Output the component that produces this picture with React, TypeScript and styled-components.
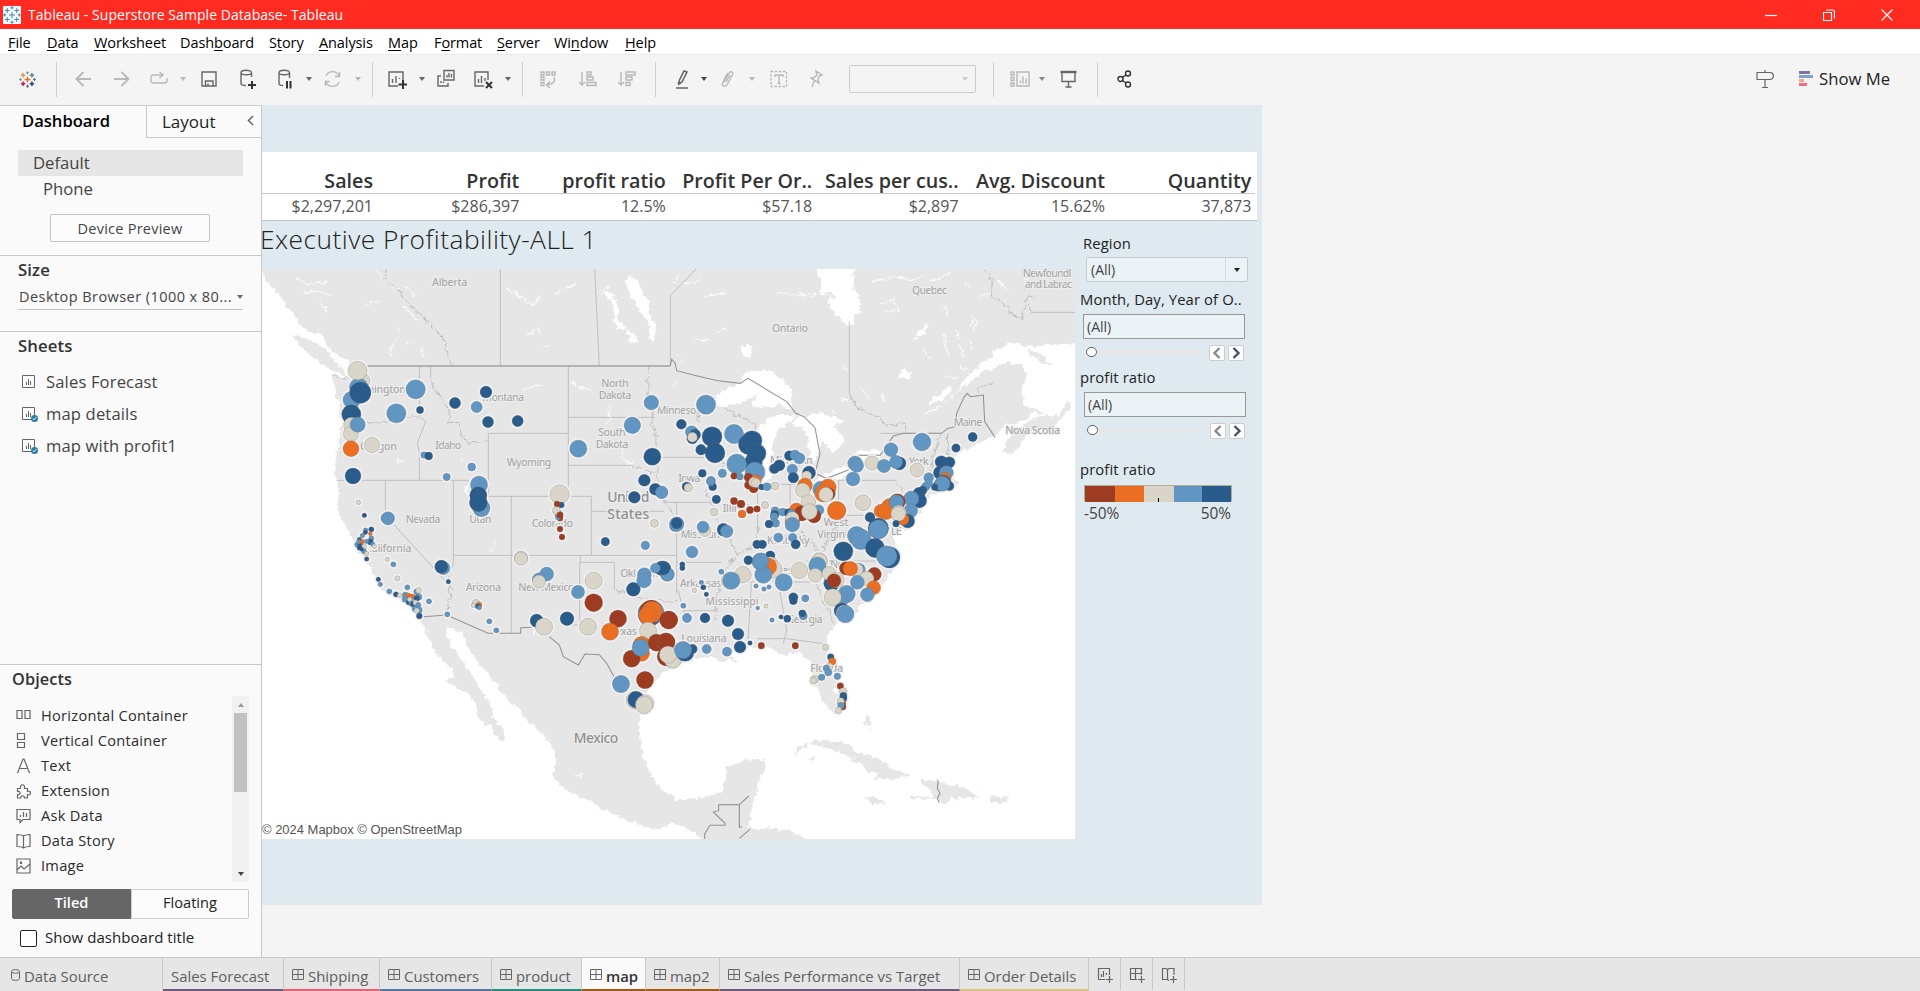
import React from "react";
import styled, { createGlobalStyle } from "styled-components";

const Global = createGlobalStyle`
  *{box-sizing:border-box}
  body{margin:0;background:#f4f4f4;overflow:hidden}
  #root{font-family:"Open Sans","Noto Sans",sans-serif;color:#333}
  svg{display:block;flex:none}
`;

const Window = styled.div`width:1920px;height:991px;display:flex;flex-direction:column;background:#f4f4f4;`;
const TitleBar = styled.header`
  height:29px;flex:none;background:#ff2a20;color:#fff;display:flex;align-items:center;
  padding-left:3px;font-size:14px;letter-spacing:.05px;
`;
const TitleText = styled.span`margin-left:7px;flex:1;white-space:nowrap;`;
const WindowButtons = styled.div`display:flex;gap:46px;padding-right:27px;`;
const MenuBar = styled.nav`height:25px;flex:none;background:#fff;display:flex;padding-left:8px;`;
const MenuItem = styled.span<{ $w: number }>`
  width:${p => p.$w}px;font-size:14.5px;line-height:27px;color:#000;white-space:nowrap;letter-spacing:-.1px;
  u{text-underline-offset:2px;}
`;
const Toolbar = styled.div`
  height:51px;flex:none;background:#f4f4f4;border-top:1px solid #eaeaea;display:flex;align-items:center;padding-bottom:2px;
`;
const Tool = styled.span<{ $gap: number; $c?: string }>`
  margin-left:${p => p.$gap}px;flex:none;color:${p => p.$c || "#666"};
  svg{fill:none;stroke:currentColor;stroke-width:1.4;}
`;
const PlusOver = styled.span`
  width:8px;height:8px;margin:12px 0 0 -8px;flex:none;
  svg{fill:none;stroke:#333;}
`;
const Divider = styled.span<{ $gap: number }>`
  margin-left:${p => p.$gap}px;width:1px;height:35px;background:#cfcfcf;flex:none;
`;
const Caret = styled.span<{ $gap?: number; $c?: string; $s?: number }>`
  margin-left:${p => p.$gap || 0}px;flex:none;width:0;height:0;
  border:${p => p.$s || 3}px solid transparent;border-bottom:0;
  border-top:${p => (p.$s || 3) + 1}px solid ${p => p.$c || "#666"};
`;
const ToolCaret = styled(Caret)`margin-right:-1px;`;
const Combo = styled.span`
  margin-left:26px;width:127px;height:28px;border:1px solid #ccc;border-radius:2px;flex:none;
  display:flex;align-items:center;justify-content:flex-end;padding-right:7px;
`;
const ShowMe = styled.span`margin-left:6px;font-size:16.700px;line-height:22px;padding-bottom:1px;color:#222;white-space:nowrap;`;

const Body = styled.div`flex:1;display:flex;min-height:0;`;
const Side = styled.aside`
  width:262px;flex:none;background:#fafafa;border-right:1px solid #c8c8c8;border-top:1px solid #ccc;
  display:flex;flex-direction:column;
`;
const SideTabs = styled.div`display:flex;height:32px;flex:none;`;
const ActiveTab = styled.div`width:146px;padding-left:22px;font-weight:600;font-size:16.600px;line-height:30px;color:#000;`;
const OtherTab = styled.div`
  flex:1;border-left:1px solid #c8c8c8;border-bottom:1px solid #c8c8c8;padding:0 7px 0 15px;font-size:17px;
  line-height:32px;color:#222;display:flex;justify-content:space-between;
  svg{margin-top:9px;}
`;
const DeviceRow = styled.div<{ $on?: boolean }>`
  margin:${p => (p.$on ? "12px 18px 0" : "0 18px")};height:26px;line-height:26px;font-size:16.700px;color:#444;
  padding-left:${p => (p.$on ? 15 : 25)}px;background:${p => (p.$on ? "#e6e6e6" : "none")};
`;
const PreviewButton = styled.div`
  margin:12px 51px 13px 50px;height:28px;border:1px solid #c4c4c4;border-radius:2px;background:#fcfcfc;
  text-align:center;font-size:14.500px;line-height:27px;letter-spacing:.25px;color:#444;
`;
const Section = styled.section<{ $h: number }>`
  border-top:1px solid #c8c8c8;height:${p => p.$h}px;flex:none;padding:0 18px;
`;
const Heading = styled.h3`margin:0;font-size:16.800px;font-weight:600;line-height:28px;letter-spacing:.1px;color:#333;`;
const SizeSelect = styled.div`
  margin-top:2px;height:24px;line-height:20px;border-bottom:1px solid #c4c4c4;font-size:14.500px;display:flex;padding-bottom:2px;
  align-items:center;justify-content:space-between;white-space:nowrap;letter-spacing:.44px;color:#444;padding-left:1px;
`;
const SheetRow = styled.div`
  display:flex;align-items:center;height:32px;padding-left:4px;gap:8px;font-size:16.600px;letter-spacing:.14px;
  white-space:nowrap;color:#444;
  svg{position:relative;top:1px;}
`;
const SheetList = styled.div`padding-top:5px;`;
const Objects = styled.section`flex:1;border-top:1px solid #c8c8c8;padding:0 12px;`;
const ObjectsHeading = styled(Heading)`font-size:16.300px;height:30px;`;
const ObjectArea = styled.div`display:flex;height:187px;padding-top:1px;justify-content:space-between;`;
const ObjectRow = styled.div`
  display:flex;align-items:center;height:25px;padding-left:4px;gap:9px;font-size:14.600px;letter-spacing:.27px;color:#2c2c2c;white-space:nowrap;
  svg{fill:none;stroke:#666;stroke-width:1.2;position:relative;top:1px;}
`;
const ObjectList = styled.div`padding-top:6px;overflow:hidden;`;
const Scroll = styled.div`
  width:17px;background:#f1f1f1;display:flex;flex-direction:column;align-items:center;padding:7px 0 6px;
`;
const UpCaret = styled.i`border:3.5px solid transparent;border-top:0;border-bottom:4px solid #999;`;
const Thumb = styled.i`width:13px;height:79px;background:#c1c1c1;margin:6px 0 auto;`;
const Toggle = styled.div`display:flex;height:30px;margin-top:7px;font-size:14.6px;line-height:25px;text-align:center;`;
const ToggleOn = styled.div`width:119px;background:#666;color:#fff;font-weight:600;border:1px solid #666;border-radius:2px 0 0 2px;`;
const ToggleOff = styled.div`flex:1;border:1px solid #ccc;color:#222;background:#fcfcfc;border-radius:0 2px 2px 0;`;
const CheckRow = styled.div`
  display:flex;margin:11px 0 0 8px;gap:8px;font-size:15px;line-height:14px;color:#222;white-space:nowrap;letter-spacing:.05px;
`;
const CheckBox = styled.i`width:17px;height:17px;border:1px solid #222;border-radius:2px;background:#fff;`;

const Dashboard = styled.main`width:1000px;height:800px;background:#deeaef;flex:none;padding-top:47px;`;
const Summary = styled.div`
  width:995px;height:69px;background:#fff;border-bottom:1px solid #c4c4c4;display:grid;
  grid-template-columns:115px repeat(6,146.4px);text-align:right;grid-template-rows:42px 26px;
`;
const SumHead = styled.div`
  border-bottom:1px solid #c8c8c8;font-weight:600;font-size:19.700px;line-height:58px;height:42px;white-space:nowrap;color:#333;
  padding-right:4px;display:flex;justify-content:flex-end;
`;
const SumValue = styled.div`font-size:16px;line-height:25px;padding-right:4px;color:#555;`;
const Content = styled.div`display:flex;`;
const MapColumn = styled.div`width:813px;`;
const MapTitle = styled.h1`
  margin:0 0 0 -2px;height:48px;line-height:37px;font-size:26.300px;letter-spacing:.48px;font-weight:300;color:#222;white-space:nowrap;
`;
const Attribution = styled.text`font:39px "Liberation Sans",sans-serif;fill:#555;`;
const MapLabel = styled.text<{ $s?: number }>`
  font:500 ${p => p.$s || 32}px "Noto Sans",sans-serif;fill:${p => (p.$s ? "#8f8f8f" : "#a9a9a9")};
  stroke:#efefef;stroke-width:5px;paint-order:stroke;
`;
const Filters = styled.div`width:187px;padding:10px 12px 0 5px;`;
const FilterLabel = styled.div<{ $in?: number; $h?: number; $top?: number }>`
  font-size:14.800px;line-height:24px;height:${p => p.$h || 26}px;padding-top:${p => p.$top || 0}px;
  font-weight:500;color:#222;letter-spacing:.12px;padding-left:${p => p.$in || 0}px;white-space:nowrap;
`;
const DropBox = styled.div`
  margin-left:6px;width:162px;height:25px;border:1px solid #c4cccf;border-radius:2px;background:#ecf3f6;
  display:flex;align-items:center;padding-left:4px;font-size:14px;color:#444;
`;
const DropArrow = styled.span`
  margin-left:auto;width:22px;height:23px;border-left:1px solid #d4dcdf;display:flex;align-items:center;justify-content:center;
`;
const RangeBox = styled.div<{ $in: number }>`
  margin-left:${p => p.$in}px;width:162px;height:25px;border:1px solid #999;background:#ecf3f6;font-size:14px;
  line-height:24px;padding-left:3px;color:#444;
`;
const SliderRow = styled.div<{ $in: number }>`
  margin:6px 0 0 ${p => p.$in + 3}px;height:16px;display:flex;align-items:center;
`;
const Knob = styled.i`width:11px;height:10px;border:1px solid #666;border-radius:5px;background:#fff;margin-bottom:2px;`;
const Track = styled.i`width:107px;height:4px;background:#e6e6e6;margin-right:5px;margin-bottom:2px;`;
const StepButton = styled.i`
  width:16px;height:16px;background:#fff;border:1px solid #ccc;border-radius:2px;margin-right:3px;
  display:flex;align-items:center;justify-content:center;
`;
const Legend = styled.div`
  margin-left:4px;width:148px;height:16px;border:1px solid #b5ab97;display:grid;
  grid-template-columns:29.5px 29px 30px 28px 1fr;justify-items:stretch;
`;
const Swatch = styled.i<{ $c: string; $tick?: boolean }>`
  background:${p => p.$c};display:flex;justify-content:center;
  &::after{content:"";width:1px;height:4px;flex:none;background:${p => (p.$tick ? "#000" : "none")};margin-top:12px;}
`;
const LegendEnds = styled.div`
  display:flex;justify-content:space-between;width:147px;margin-left:4px;font-size:15.400px;line-height:25px;color:#444;
`;

const TabStrip = styled.footer`
  height:34px;flex:none;background:#e6e6e6;border-top:1px solid #c8c8c8;display:flex;
`;
const SheetTab = styled.div<{ $w: number; $c?: string; $on?: boolean; $pad?: number }>`
  width:${p => p.$w}px;border-right:1px solid #c8c8c8;border-bottom:2px solid ${p => p.$c || "#e6e6e6"};
  background:${p => (p.$on ? "#fafafa" : "#e6e6e6")};font-weight:${p => (p.$on ? 600 : 400)};
  color:${p => (p.$on ? "#333" : "#606060")};display:flex;align-items:center;gap:4px;padding:0 0 0 ${p => p.$pad ?? 8}px;
  font-size:14.900px;white-space:nowrap;
  svg{fill:none;stroke:#666;margin-top:3px;}
`;
const TabName = styled.span`padding-top:5px;`;

const Cell = ({ d, w, h = 20, sw }: { d: string; w: number; h?: number; sw?: number }) => (
  <svg width={w} height={h} viewBox={`0 0 ${w} ${h}`}><path d={d} strokeWidth={sw} /></svg>
);

const Spark = ({ size, mono }: { size: number; mono?: boolean }) => {
  const plus = (x: number, y: number, r: number) => `M${x - r} ${y}h${2 * r}M${x} ${y - r}v${2 * r}`;
  const parts: [number, number, number, string][] = [
    [9, 9, 3, "#ea6f22"], [4.3, 4.5, 2.3, "#e0974a"], [13.7, 4.5, 2.3, "#59879b"], [4.3, 13.5, 2.3, "#c72035"],
    [13.7, 13.5, 2.3, "#1f457e"], [9, 1.8, 1.6, "#7199a6"], [9, 16.2, 1.6, "#5b6591"], [1.6, 9, 1.5, "#7199a6"], [16.4, 9, 1.5, "#5b6591"],
  ];
  return (
    <svg width={size} height={size} viewBox="0 0 18 18">
      {mono && <rect width="18" height="18" fill="#f2f8fb" stroke="none" />}
      {parts.map(([x, y, r, c], i) => <path key={i} d={plus(x, y, r)} stroke={mono ? "#3f88ad" : c} strokeWidth={mono ? 1 : i < 5 ? 1.6 : 1.1} />)}
    </svg>
  );
};

const SheetIcon = ({ used }: { used?: boolean }) => (
  <svg width="16" height="16" viewBox="0 0 16 16" fill="none" stroke="#666">
    <path d="M.5 1.500h12v12H.5zM4.500 11V8M6.500 11V5M8.500 11V7" />
    {used && <><circle cx="12.500" cy="12.500" r="3.500" fill="#2c7fa3" stroke="none" /><path d="M10.900 12.600l1.200 1.200 2.200-2.500" stroke="#fff" /></>}
  </svg>
);
const GridIcon = () => <Cell w={12} h={12} d="M.5 .5h11v10h-11zM6 .5v10M.5 5.500h11" />;

const menu: [string, string, string, number][] = [
  ["", "F", "ile", 39], ["", "D", "ata", 47], ["", "W", "orksheet", 86], ["Dash", "b", "oard", 89], ["S", "t", "ory", 50],
  ["", "A", "nalysis", 69], ["", "M", "ap", 46], ["F", "o", "rmat", 63], ["", "S", "erver", 57], ["Wi", "n", "dow", 71], ["", "H", "elp", 60],
];
const objects: [string, string][] = [
  ["Horizontal Container", "M1 2.500h5v8h-5zM9 2.500h5v8h-5z"],
  ["Vertical Container", "M1.500 .5h7v6h-7zM1.500 9.500h7v5h-7z"],
  ["Text", "M1.500 15L7 1h1l5.500 14M4 10.500h7"],
  ["Extension", "M1.500 5.500h3c-1-5 5-5 4 0h3v3c4-1.500 4 4.500 0 3v3.500h-3c0-3-4-3-4 0h-3v-3.500c3.500 1 3.500-4 0-3z"],
  ["Ask Data", "M1 1.500h13v10h-7l-3 3v-3h-3zM4.500 9V7M7.500 9V4M10.500 9V5"],
  ["Data Story", "M7.500 3c-2-1.500-4-1.500-6.500-1.500v12c3 0 5 .3 6.500 1.500 1.500-1.200 3.500-1.500 6.500-1.500v-12c-2.500 0-4.500 0-6.500 1.500v12"],
  ["Image", "M1 1h13v14h-13zM1 12l4-4 3 3 6-5M4.500 4h1v1.500h-1z"],
];
const summary = [
  ["Sales", "$2,297,201"], ["Profit", "$286,397"], ["profit ratio", "12.5%"], ["Profit Per Or..", "$57.18"],
  ["Sales per cus..", "$2,897"], ["Avg. Discount", "15.62%"], ["Quantity", "37,873"],
];
const sheetTabs: [string, number, string, boolean?, boolean?][] = [
  ["Sales Forecast", 121, "#6b5b7e", false, true], ["Shipping", 96, "#ed5f73"], ["Customers", 112, "#4e79a7"], ["product", 90, "#1f8f7c"],
  ["map", 64, "#a8590f", true], ["map2", 74, "#a8590f"], ["Sales Performance vs Target", 240, "#6b5b7e"], ["Order Details", 129, "#dcc47a"],
];

const palette: Record<string, string> = { B: "#2a5c8b", L: "#6196c3", G: "#d9d5c8", O: "#ea6f22", R: "#9e3c22" };

/* Marks of the four map sheets: "x y radius colour", each sheet measured from its own corner. */
const marks = [
  {
    at: [0, 0],
    list: `308 362 22G,296 382 28L,275 420 26L,293 332 28G,301 398 32B,274 463 29B,274 495 23G,273 522 23G,293 494 23L,273 566 24O,279 648 24B,336 555 23G,467 388 29L,409 460 29L,480 450 11B,678 396 18B,585 429 17B,650 441 17L,684 486 17B,773 483 17B,492 585 10L,506 588 12B,560 651 11L,635 621 12L,657 674 26L,664 744 26L,655 706 26B,655 728 27B,378 775 15L,384 775 20L,313 766 7B,295 727 7G,955 566 26L,1117 496 25L,1174 428 22L,1177 590 26B,1153 661 18B,1205 697 18L,1186 688 18B,1123 712 18B,1183 790 12G,1243 800 14L,1251 790 19B,1036 845 13B,1156 856 13L,899 703 29G,904 735 9B,891 732 9R,895 762 11L,889 752 12G,900 775 9R,894 772 8L,900 765 10R,900 807 9R,906 831 9R,783 893 20G,317 810 7L,334 808 8B,316 817 7B,331 821 6O,307 827 7L,334 835 8L,298 839 7B,331 846 9B,338 853 7L,343 859 7G,292 854 8L,300 850 8B,296 845 7L,307 845 7O,320 844 7L,299 863 8B,313 860 7G,312 874 8L,305 868 6B,320 881 7G,320 897 7B`,
  },
  {
    at: [1200, 0],
    list: `138 434 29L,64 493 15B,95 516 19L,105 524 17B,97 535 17B,97 532 15G,123 569 16B,156 530 30B,165 579 30B,222 522 29L,265 553 30B,276 542 30B,289 580 29B,280 608 27B,230 612 30L,285 636 30L,127 640 12B,187 640 13L,153 663 14L,158 680 12B,152 665 12L,80 680 14B,85 683 13G,5 697 19L,169 718 13B,162 756 12G,222 648 10R,240 650 10L,265 652 13R,288 660 16O,266 675 13R,281 685 14R,281 667 15G,288 669 14G,305 681 9B,321 680 12L,345 678 12G,222 723 11R,243 732 12R,270 750 11R,291 747 10R,315 735 11G,246 762 12O,388 587 15B,405 585 15L,418 595 17L,343 626 15B,358 616 17B,397 628 16L,447 638 20B,400 653 16B,440 648 15G,435 676 22O,428 691 22G,482 688 24L,504 682 25O,490 700 26O,507 702 19R,498 704 22G,530 752 28O,409 751 22O,476 750 16L,445 726 22G,425 760 23R,462 768 21R,448 755 24G,345 752 12L,368 756 12L,385 758 12B,395 760 12L,344 764 13B,342 770 12L,347 790 12L,327 792 12B,397 783 22O,397 775 20G,397 794 22L,355 833 14L,398 833 13L,407 853 14B,291 853 13B,307 853 13B,50 793 22L,50 790 17B,135 812 18G,129 801 18L,190 809 19B,200 814 19L,96 876 18L,786 546 27L,693 569 21L,585 610 22L,591 617 20L,579 657 21L,636 609 21G,672 618 20L,718 610 20B,708 606 20L,771 630 21G,938 531 14B,888 564 13B,844 606 19B,868 607 17B,840 638 20B,859 638 21L,868 678 14B,836 677 17B,855 655 18O,850 668 23B,847 671 23L,824 682 10B,806 653 15L,797 680 13L,788 691 13B,806 670 12L,777 700 18B,778 722 22B,754 716 23L,609 728 24G,752 752 21L,690 742 27O,662 753 20O,678 755 24O,712 725 24R,709 726 22L,716 760 24G,743 783 21B,729 778 18O,715 762 22G,708 791 10B,630 772 15B,655 805 31B,655 808 29L,590 827 28L,603 838 31L,550 874 29B,645 864 29B,688 892 32B,680 888 31L,330 886 13B,302 905 26L,265 900 13B,478 902 24G`,
  },
  {
    at: [0, 840],
    list: `382 58 7G,400 73 8L,355 118 7B,361 133 7L,412 115 8G,388 154 8L,442 142 8L,408 163 8B,419 166 7G,436 165 9L,445 168 9O,457 170 8O,470 155 9L,476 151 9G,476 171 10L,435 178 9L,446 187 8B,449 178 8L,455 190 9L,470 175 9B,460 193 9B,467 188 8G,475 195 8L,465 206 9L,477 210 10L,470 212 8G,478 228 9B,449 178 7G,507 184 8L,562 223 8L,550 84 20L,544 80 20B,565 125 7B,648 190 12G,640 196 7G,657 195 9O,654 199 8B,658 203 7L,688 244 8L,709 271 8L,783 56 20G,837 118 20L,860 102 21L,837 125 20G,954 156 20L,830 242 20B,852 260 26G,921 236 21B,1001 122 26G,1001 188 27R,984 260 26G,1074 236 26R,1050 275 26O,1120 148 21B,1153 104 21L,1152 122 22L,1205 85 22B,1222 103 21L,1210 85 22B,1170 222 36B,1165 218 31L,1174 216 36R,1181 216 31L,1176 215 31O,1163 226 27O,1226 240 27R,1164 272 26G,1145 315 26O,1145 340 24O,1115 356 26R,1142 323 26L,1190 308 26R,1218 306 27R,1220 350 28R,1238 358 26G,1224 344 26G,1155 420 26R,1083 432 26L,1125 481 27G,1128 479 25B,1155 490 26G,1152 495 26G`,
  },
  {
    at: [1200, 840],
    list: `12 85 20B,22 103 20L,10 85 20B,26 240 27R,18 306 27R,20 350 28R,38 358 26G,75 337 27B,98 327 14B,24 344 26G,69 330 26L,-14 85 15L,67 73 8B,67 84 8B,265 61 13B,331 47 14B,184 95 8L,124 127 7L,130 142 8B,139 163 7B,103 151 7G,70 197 8L,81 234 14L,135 234 15B,204 242 18B,234 282 18B,240 321 18B,201 335 14L,140 327 14L,270 309 7B,210 122 26G,249 104 25G,214 122 26L,331 75 25G,340 88 27G,323 80 27O,310 104 26L,302 64 25L,371 127 26L,288 138 7L,312 147 7L,327 141 7L,293 204 6L,318 198 7G,336 240 7L,363 231 7B,400 172 14B,400 182 12B,436 175 11L,382 236 11B,430 228 12L,427 220 11B,304 317 10R,406 317 10R,418 91 25G,478 64 24G,472 77 26L,466 106 21G,515 130 24B,507 100 21G,530 120 23G,522 122 21R,558 85 20R,598 88 18L,590 89 20G,571 86 22O,643 103 21R,620 116 22G,592 127 21L,641 143 21O,622 164 21L,560 162 26L,545 180 20L,518 172 26G,545 212 23B,553 220 25G,556 222 26L,496 322 10G,512 351 10B,517 364 11O,508 380 11G,499 385 10L,505 397 11L,532 409 10L,465 418 12G,460 422 10G,485 412 10L,541 438 10R,549 454 11G,550 468 11B,550 475 11B,545 490 12R,542 484 11G,548 500 10R,543 497 10L,535 511 10G`,
  },
];

const land = `M0 20L6 42L30 72L62 112L80 140L98 160L112 178L110 202L145 214L190 230L205 265L240 298L272 322L262 352L240 358L215 345L222 390L240 440L246 480L238 540L228 600L223 640L232 665L238 700L230 740L245 780L268 812L282 845L300 880L330 920L345 950L365 990L390 1005L430 1020L455 1040L475 1065L490 1100L515 1150L525 1175L560 1215L590 1250L570 1258L556 1264L590 1282L620 1295L650 1340L655 1375L690 1400L712 1430L725 1447L738 1430L728 1405L700 1370L690 1330L665 1295L650 1270L640 1245L615 1215L592 1185L570 1150L555 1120L560 1102L600 1115L615 1140L630 1175L655 1210L690 1250L720 1290L745 1325L775 1340L790 1370L830 1405L865 1440L885 1480L885 1530L875 1545L900 1575L945 1605L1000 1625L1030 1650L1100 1680L1150 1700L1190 1710L1240 1690L1290 1705L1335 1745L1650 1745L1620 1725L1590 1712L1530 1705L1480 1707L1465 1700L1470 1670L1475 1640L1487 1600L1490 1580L1500 1555L1518 1520L1515 1500L1470 1498L1400 1520L1395 1560L1385 1595L1340 1610L1250 1620L1220 1600L1190 1570L1160 1520L1145 1480L1140 1420L1141 1366L1150 1310L1180 1270L1210 1240L1240 1225L1270 1210L1300 1200L1320 1190L1370 1192L1382 1205L1400 1200L1436 1208L1410 1190L1415 1175L1445 1165L1500 1160L1540 1165L1575 1187L1610 1175L1645 1195L1660 1225L1650 1265L1670 1280L1685 1320L1720 1360L1745 1357L1760 1330L1758 1290L1730 1240L1710 1190L1697 1150L1705 1125L1725 1090L1790 1055L1800 1035L1830 1020L1860 995L1890 940L1915 915L1915 875L1900 835L1912 800L1900 790L1930 815L1960 780L1995 740L2000 710L2060 690L2098 668L2078 650L2075 610L2095 580L2140 555L2200 530L2232 500L2302 475L2318 450L2290 430L2285 385L2297 350L2292 312L2240 306L2180 330L2120 370L2080 410L2000 465L1988 465L2050 430L2090 398L2120 350L2160 312L2198 290L2202 272L2250 248L2330 258L2450 250V20Z`;
const islands = `M92 222L150 238L195 265L230 300L250 328L262 352L238 345L205 325L170 300L130 270Z
M2230 570L2240 540L2300 490L2332 470L2400 465L2424 425L2430 445L2380 500L2300 520L2265 575L2242 588ZM2290 272L2330 276L2378 312L2350 308ZM2312 445L2348 452L2352 460L2320 456ZM2405 450L2425 420L2428 450L2405 465Z
M1600 1485L1612 1462L1660 1442L1700 1440L1760 1450L1790 1476L1840 1490L1880 1515L1905 1528L1952 1547L1900 1556L1835 1558L1856 1545L1820 1530L1800 1505L1770 1498L1740 1474L1690 1462L1650 1452L1620 1470Z
M1980 1562L2030 1560L2070 1575L2110 1585L2150 1602L2150 1615L2080 1615L2048 1634L2030 1618L1950 1615L1948 1607L2020 1612L2005 1580ZM1812 1613L1850 1613L1880 1630L1840 1632ZM2194 1611L2246 1613L2235 1627L2196 1626ZM1645 1490L1662 1492L1660 1500L1648 1498ZM1818 1365L1830 1380L1828 1394L1815 1388ZM1828 1398L1836 1412L1832 1412Z`;
const water = `M1670 20H1785L1780 80L1800 120L1800 155L1780 165L1785 185L1765 200L1740 180L1710 140L1705 110L1680 100L1685 70Z
M1360 440L1370 405L1430 370L1460 335L1530 330L1585 375L1595 440L1602 455L1560 432L1530 445L1475 435L1490 405L1440 428L1380 440Z
M1500 495L1488 530L1488 590L1500 650L1520 667L1535 650L1545 600L1535 560L1555 510L1590 485L1602 465L1550 465L1520 485Z
M1605 470L1600 500L1628 500L1645 530L1640 560L1655 575L1645 600L1665 605L1680 560L1690 540L1720 580L1745 555L1750 530L1720 500L1730 490L1760 485L1720 470L1680 460Z
M1665 665L1700 640L1760 620L1785 625L1760 645L1700 670ZM1770 605L1790 575L1840 570L1870 570L1865 590L1810 600Z
M1095 60L1115 50L1140 70L1145 95L1165 120L1170 160L1190 205L1180 245L1165 235L1170 200L1140 150L1110 110Z
M1030 95L1060 100L1075 150L1070 175L1100 205L1132 235L1125 255L1110 240L1095 205L1075 210L1060 180L1065 140Z
M613 678L626 674L622 690L632 712L622 705ZM1440 265L1462 250L1475 268L1470 295L1450 290ZM1715 450L1725 445L1727 465ZM110 190L150 220L145 228L115 210ZM200 262L240 290L268 300L272 330L240 322L215 295ZM1912 345L1930 328L1955 342L1950 355L1915 352ZM1960 250L1975 215L2005 190L1995 215L1970 235ZM1715 1290L1730 1285L1732 1300L1722 1302ZM945 1543L972 1543L965 1550L948 1548ZM2000 430L2040 400L2070 375L2080 385L2045 425ZM823 1100L832 1110L826 1130Z`;
const lakes = `M110 55L160 75L205 62M130 100L180 92L215 110M175 120L205 160M350 30L372 65M390 75L420 90M425 70L470 110M428 135L470 180M320 130L358 124M392 290L398 255L415 235M410 205L416 220M440 245L458 250M483 255L490 300M735 85L775 105L818 136L840 108M795 228L822 215L832 203L842 222M850 258L866 262M888 100L950 70M1020 100L1050 75M930 365L970 385L1000 392M790 390L820 380L850 375M1050 440L1045 490M1085 555L1090 600L1120 620L1170 640M610 598L600 608M690 868L706 850M408 600L428 602
M1235 70L1260 45M1270 75L1320 60M1330 105L1400 100M1300 240L1350 242M1370 215L1400 205M1250 285L1265 310M1550 100L1620 105L1670 100M1840 65L1900 50L1960 60L2000 40M1860 130L1900 120L1915 150M1870 155L1920 150M2010 65L2070 40M2050 140L2065 165M2130 160L2150 185L2140 215M2140 185L2130 200M2050 220L2065 290M2100 255L2110 290M2090 210L2100 235M2160 110L2190 100M2110 60L2130 85M2130 240L2135 275M1800 380L1825 410M1990 270L2010 300M2060 345L2090 358M1865 400L1870 430M1745 325L1765 330M1740 415L1765 420M2210 60L2250 95M2290 60L2340 40M2100 320L2120 330M1250 365L1240 375`;
const straightBorders = `M721 27V318M1004 27L1018 318M318 318H1231M1231 318V107L1308 27M478 318V470L497 485L472 550L478 575V661M512 318V355M230 661H685M376 661V765L580 990M580 661V912L575 925M685 661V520H925M925 318V709M685 661V709M660 709H994M754 709V1120M580 886H1250M925 472H1185M925 616H1120M994 709V886M994 754H1212M961 886V907H1063V990M959 907V1095H920M1209 592H1385M1210 727H1355M1250 727V1000M1250 907H1385M1254 990L1270 1052M1271 1052H1368M1271 1080V1052M1493 690V820M1590 673V810M1480 673H1640M1736 660V770M1736 661H1910M1736 766H1912M1590 955L1500 966L1382 966M1474 970L1464 1140M1555 970L1580 1110L1570 1150M1492 1136H1580L1697 1152M1540 966H1660M1640 903H1850M1768 185V400M2314 157H2445M1862 520H2045M1790 586H1862L1900 528M1376 1634H1438V1702`;
const wigglyBorders = `M376 27L378 55L410 85L440 130L480 160L520 205L555 240L562 290L580 318M215 345L250 357L268 352M512 355L520 385L555 430L570 455L566 490L590 490L610 530L622 550L685 540M320 490L380 485L430 472L478 470M425 850L430 860M1163 320L1165 420L1182 450L1175 490L1188 520V592L1190 650L1210 720L1240 760L1250 780M1120 616L1185 640M1315 490L1312 470L1340 440M1355 727L1340 690L1390 640L1385 592L1330 540L1315 510M1355 727L1365 760L1400 830L1432 880L1400 920L1372 1000L1365 1080M1432 885L1460 870L1490 840L1495 800M1460 870L1530 840L1590 825L1640 830L1680 880L1736 790M1640 830L1600 790M1660 960L1700 1040L1722 1095M1063 990L1110 1005L1180 1020L1254 1025M1390 440L1440 470L1485 490L1490 520M562 920L570 1000L560 1065M2062 520L2065 590M2015 640L2020 580L2045 520M1983 600L1985 640M1768 400L1790 445L1850 470L1880 495L1940 490L1940 515M2172 27L2200 60L2190 105L2220 120L2250 155L2285 178L2300 115L2320 108M2314 157L2302 130M2155 400L2158 378L2205 370M1900 660L1930 690L1940 720`;
const nation = `M318 318H1231M1231 318L1235 298L1245 308L1250 332L1300 345L1340 355L1375 362L1440 370L1464 355L1580 425L1608 460L1632 470L1665 503L1680 582L1665 640L1700 655L1790 620M1790 586H1860L1900 528L1930 520H2045L2062 506L2085 500L2090 460L2112 412L2122 400L2132 410L2170 405L2174 485L2205 532M492 1070L560 1065L684 1120H782V1103L815 1102M868 1130L898 1155L910 1190L955 1215L975 1182L1018 1184L1040 1210L1062 1250M1376 1634H1438V1702L1446 1700M1376 1634V1652L1360 1656L1395 1690V1696H1350L1334 1722V1740M1438 1634L1466 1608M1470 1708L1438 1735M2035 1562L2032 1585L2040 1600L2032 1615L2038 1628`;

const labels: [string, number, number, number][] = [
  ["Alberta", 516, 78, 106], ["Montana", 667, 423, 125], ["Washington", 262, 398, 176], ["Oregon", 300, 570, 111], ["Idaho", 526, 566, 78],
  ["Wyoming", 740, 617, 134], ["Nevada", 437, 789, 104], ["Utah", 628, 789, 66], ["Colorado", 815, 800, 124], ["California", 316, 876, 138],
  ["North", 1024, 380, 82], ["Dakota", 1016, 416, 98], ["South", 1015, 528, 82], ["Dakota", 1007, 564, 98], ["Minnesota", 1190, 461, 146],
  ["Arizona", 617, 993, 106], ["New Mexico", 775, 993, 168], ["Texas", 1052, 1126, 79], ["Oklahoma", 1081, 951, 140], ["Ontario", 1536, 216, 108],
  ["Quebec", 1956, 101, 105], ["Newfoundl", 2288, 50, 146], ["and Labrac", 2294, 84, 142], ["Maine", 2081, 497, 86],
  ["Nova Scotia", 2236, 522, 164], ["Michigan", 1530, 613, 128], ["New York", 1880, 615, 126], ["Iowa", 1255, 665, 66], ["Illinois", 1388, 756, 94],
  ["Missouri", 1262, 834, 118], ["Kentucky", 1521, 852, 128], ["West", 1691, 797, 74], ["Virginia", 1672, 835, 108], ["Tennessee", 1500, 941, 145],
  ["Arkansas", 1260, 982, 124], ["Mississippi", 1336, 1035, 160], ["Georgia", 1580, 1089, 108], ["Louisiana", 1264, 1147, 136],
  ["Florida", 1651, 1237, 98], ["North", 1710, 925, 78], ["DE", 1893, 825, 32],
];

const USMap = () => (
  <svg width="813" height="570" viewBox="6 27 2439 1710">
    <defs>
      <filter id="rough" filterUnits="userSpaceOnUse" x="-20" y="0" width="2500" height="1760">
        <feTurbulence type="fractalNoise" baseFrequency="0.06" numOctaves="3" seed="4" result="n" />
        <feDisplacementMap in="SourceGraphic" in2="n" scale="22" xChannelSelector="R" yChannelSelector="G" />
      </filter>
    </defs>
    <rect width="2500" height="1800" fill="#fff" />
    <g filter="url(#rough)">
      <path d={land} fill="#e6e6e6" /><path d={islands} fill="#e6e6e6" />
      <path d={water} fill="#fff" /><path d="M1685 90L1730 105L1715 116Z" fill="#e6e6e6" />
      <path d={lakes} fill="none" stroke="#fafafa" strokeWidth="4" />
      <path d={wigglyBorders} fill="none" stroke="#b6b6b6" strokeWidth="2.6" />
    </g>
    <path d={straightBorders} fill="none" stroke="#bcbcbc" strokeWidth="2.8" />
    <path d={nation} fill="none" stroke="#939393" strokeWidth="3.2" />
    {labels.map(([t, x, y, w], i) => <MapLabel key={i} x={x} y={y} textLength={w}>{t}</MapLabel>)}
    <MapLabel $s={42} x={1042} y={727} textLength={126}>United</MapLabel>
    <MapLabel $s={42} x={1042} y={778} textLength={126}>States</MapLabel>
    <MapLabel $s={42} x={941} y={1449} textLength={134}>Mexico</MapLabel>
    {["halo", "dot"].map(layer => marks.map((m, i) => (
      <g key={layer + i} transform={`translate(${m.at[0]} ${m.at[1]})`}>
        {m.list.split(",").map((s, j) => {
          const [x, y, rc] = s.split(" ");
          const r = parseInt(rc, 10);
          return layer === "halo"
            ? <circle key={j} cx={x} cy={y} r={r + 5} fill="#f3f3f3" />
            : <circle key={j} cx={x} cy={y} r={r} fill={palette[rc.slice(-1)]} stroke="#6e6a66" strokeOpacity=".4" strokeWidth="2" />;
        })}
      </g>
    )))}
    <rect x="6" y="1680" width="611" height="50" fill="#fff" fillOpacity=".7" />
    <Attribution x="6" y="1721" textLength="600" lengthAdjust="spacingAndGlyphs">© 2024 Mapbox © OpenStreetMap</Attribution>
  </svg>
);

const Step = ({ next }: { next?: boolean }) => (
  <StepButton><svg width="10" height="12" viewBox="0 0 10 12" fill="none" stroke={next ? "#44546f" : "#8a8a8a"} strokeWidth="2.400"><path d={next ? "M2.500 1l5 5-5 5" : "M7.500 1l-5 5 5 5"} /></svg></StepButton>
);
const Range = ({ inset }: { inset: number }) => (
  <><RangeBox $in={inset}>(All)</RangeBox><SliderRow $in={inset}><Knob /><Track /><Step /><Step next /></SliderRow></>
);

export default function App() {
  const off = "#b8b8b8";
  return (
    <Window>
      <Global />
      <TitleBar>
        <Spark size={18} mono />
        <TitleText>Tableau - Superstore Sample Database- Tableau</TitleText>
        <WindowButtons>
          {["M0 6.500h12", "M.5 3.500h8v8h-8zM3 1h6.500q2 0 2 2v6.500", "M.5 .5l11 11M11.500 .5l-11 11"].map(d => (
            <svg key={d} width="12" height="12" fill="none" stroke="#fff" strokeWidth="1.200"><path d={d} /></svg>
          ))}
        </WindowButtons>
      </TitleBar>
      <MenuBar>{menu.map(([a, b, c, w]) => <MenuItem key={a + b + c} $w={w}>{a}<u>{b}</u>{c}</MenuItem>)}</MenuBar>
      <Toolbar>
        <Tool $gap={19}><Spark size={17} /></Tool>
        <Divider $gap={20} />
        <Tool $gap={18} $c={off}><Cell w={16} sw={1.8} d="M16 10H1.500M8.500 3l-7 7 7 7" /></Tool>
        <Tool $gap={23} $c={off}><Cell w={16} sw={1.8} d="M0 10h14.500M7.500 3l7 7-7 7" /></Tool>
        <Tool $gap={20} $c={off}><Cell w={18} d="M12 6H3.500q-2.500 0-2.500 2.500v3q0 2.500 2.500 2.500h11q2.500 0 2.500-2.500V9M9.500 3l3.500 3-3.500 3" /></Tool>
        <ToolCaret $gap={12} $c={off} />
        <Tool $gap={16}><Cell w={16} d="M1 3h14v14H1zM4.500 17v-5h7.500v5M7 14.500v2" /></Tool>
        <Tool $gap={23}><Cell w={16} d="M11.500 8V3.500c0-3-10.500-3-10.500 0v11c0 1.500 2 2 5 2M1 3.500c0 3 10.500 3 10.500 0" /></Tool>
        <PlusOver><Cell w={8} h={8} sw={2} d="M4 0v8M0 4h8" /></PlusOver>
        <Tool $gap={22}><svg width="14" height="20"><path d="M11.500 9V3.500c0-3-10.500-3-10.500 0v11c0 1.500 2 2 4 2M1 3.500c0 3 10.500 3 10.500 0" /><path d="M9 12v7.500M12.500 12v7.500" stroke="#333" strokeWidth="2" /></svg></Tool>
        <ToolCaret $gap={14} />
        <Tool $gap={13} $c={off}><Cell w={17} d="M2 7a7 7 0 0 1 13 0M2 13a7 7 0 0 0 13 0M15.500 3v4.500H11M1.500 17v-4.500H6" /></Tool>
        <ToolCaret $gap={14} $c={off} />
        <Divider $gap={12} />
        <Tool $gap={15}><svg width="19" height="20"><path d="M10 17H1V3h14v8M4.500 14V10M8 14V7M11.500 10V9" /><path d="M15 11v9M10.500 15.500H19" stroke="#333" strokeWidth="2" /></svg></Tool>
        <ToolCaret $gap={12} />
        <Tool $gap={13}><Cell w={18} d="M7 1.500h10v9.500H7zM4 7H1v10h10v-3M10 8.500V6M12 8.500V4M14.500 8.500V5M4 14V12M6.500 14v-1.500" /></Tool>
        <Tool $gap={19}><svg width="19" height="20"><path d="M10 17H1V3h13v8M4.500 14V10M7.500 14V7M11 12V9" /><path d="M12 13l6 6M18 13l-6 6" stroke="#333" strokeWidth="2" /></svg></Tool>
        <ToolCaret $gap={12} />
        <Divider $gap={12} />
        <Tool $gap={17} $c={off}><Cell w={17} d="M1 3h3v3H1zM6.500 3h3v3h-3zM12 3h3v3h-3zM1 8h3v3H1zM1 13.500h3v3H1zM14 8c2 5-1 7-7 8M10 12.500L6.500 16l3.500 3" /></Tool>
        <Tool $gap={22} $c={off}><Cell w={18} d="M3 3v13M0 13l3 3 3-3M8 3h4v3H8zM8 8h6v3H8zM8 13.500h9v3H8z" /></Tool>
        <Tool $gap={21} $c={off}><Cell w={18} d="M3 3v13M0 13l3 3 3-3M8 3h9v3H8zM8 8h6v3H8zM8 13.500h4v3H8z" /></Tool>
        <Divider $gap={19} />
        <Tool $gap={20}><Cell w={12} d="M8 2l3 1-5 10-3 2 .5-4zM2 15l1-2M0 19h12" sw={1.6} /></Tool>
        <ToolCaret $gap={13} $c="#444" />
        <Tool $gap={15} $c={off}><Cell w={13} d="M3 13L8 4c1.500-2.500 4.500-1 3.500 1.500L6.500 15c-2 4-6 2-5-1L6.500 4M5 13L9 6" /></Tool>
        <ToolCaret $gap={15} $c={off} />
        <Tool $gap={16} $c={off}><svg width="18" height="20"><rect x="1" y="2.500" width="15.500" height="15" strokeDasharray="2.500 1.500" /><path d="M5 8V6h8v2M9 6v8.500M7.500 14.500h3" /></svg></Tool>
        <Tool $gap={22} $c={off}><Cell w={13} d="M6 2l6 4-3 1-1 4 1 3-8-5 3-.5L7 6zM4.500 11L2 18" /></Tool>
        <Combo><Caret $c="#ccc" $s={3.5} /></Combo>
        <Divider $gap={17} />
        <Tool $gap={16} $c={off}><Cell w={20} d="M1 3h3v3H1zM1 8.500h3v3H1zM1 14h3v3H1zM7 3h12v14H7zM10.500 14.500v-3M13 14.500v-7M16 14.500v-5" /></Tool>
        <ToolCaret $gap={9} $c="#888" />
        <Tool $gap={16}><svg width="17" height="20"><path d="M2 3v9.500h13V3M8.500 12.500V18M5.500 18h6" /><path d="M.5 3h16" strokeWidth="2.400" /></svg></Tool>
        <Divider $gap={20} />
        <Tool $gap={19} $c="#333"><svg width="15" height="20"><circle cx="3.500" cy="10" r="2.500" /><circle cx="11" cy="4.500" r="2.500" /><circle cx="11" cy="15.500" r="2.500" /><path d="M5.500 8.500l3.500-2.500M5.500 11.500l3.500 2.500" /></svg></Tool>
        <Tool $gap={624}><Cell w={19} d="M9 1v2M1 3.500h14q2.500 1 2.500 3.500-.5 3-3 3.500H1zM9 11v7.500M6 18.500h6" sw={1.2} /></Tool>
        <Tool $gap={24}><svg width="14" height="16"><g stroke="none"><path d="M0 0h11v3H0z" fill="#86719a" /><path d="M0 4h14v3H0z" fill="#7ea2cc" /><path d="M0 8h5v3H0z" fill="#f0a780" /><path d="M0 12h8v3H0z" fill="#f56b7d" /></g></svg></Tool>
        <ShowMe>Show Me</ShowMe>
      </Toolbar>
      <Body>
        <Side>
          <SideTabs>
            <ActiveTab>Dashboard</ActiveTab>
            <OtherTab>Layout<svg width="7" height="11" fill="none" stroke="#666" strokeWidth="1.500"><path d="M6 1L1.500 5.500 6 10" /></svg></OtherTab>
          </SideTabs>
          <DeviceRow $on>Default</DeviceRow>
          <DeviceRow>Phone</DeviceRow>
          <PreviewButton>Device Preview</PreviewButton>
          <Section $h={76}>
            <Heading>Size</Heading>
            <SizeSelect>Desktop Browser (1000 x 80...<Caret $s={3.5} /></SizeSelect>
          </Section>
          <Section $h={333}>
            <Heading>Sheets</Heading>
            <SheetList>
              <SheetRow><SheetIcon />Sales Forecast</SheetRow>
              <SheetRow><SheetIcon used />map details</SheetRow>
              <SheetRow><SheetIcon used />map with profit1</SheetRow>
            </SheetList>
          </Section>
          <Objects>
            <ObjectsHeading>Objects</ObjectsHeading>
            <ObjectArea>
              <ObjectList>{objects.map(([t, d]) => <ObjectRow key={t}><Cell w={16} h={16} d={d} />{t}</ObjectRow>)}</ObjectList>
              <Scroll><UpCaret /><Thumb /><Caret $s={3.5} $c="#444" /></Scroll>
            </ObjectArea>
            <Toggle><ToggleOn>Tiled</ToggleOn><ToggleOff>Floating</ToggleOff></Toggle>
            <CheckRow><CheckBox />Show dashboard title</CheckRow>
          </Objects>
        </Side>
        <Dashboard>
          <Summary>
            {summary.map(([h]) => <SumHead key={h}>{h}</SumHead>)}
            {summary.map(([h, v]) => <SumValue key={h}>{v}</SumValue>)}
          </Summary>
          <Content>
            <MapColumn><MapTitle>Executive Profitability-ALL 1</MapTitle><USMap /></MapColumn>
            <Filters>
              <FilterLabel $in={3}>Region</FilterLabel>
              <DropBox>(All)<DropArrow><Caret $s={3.5} $c="#222" /></DropArrow></DropBox>
              <FilterLabel $h={32} $top={5}>Month, Day, Year of O..</FilterLabel>
              <Range inset={3} />
              <FilterLabel $h={31} $top={4}>profit ratio</FilterLabel>
              <Range inset={4} />
              <FilterLabel $h={46} $top={18}>profit ratio</FilterLabel>
              <Legend>
                <Swatch $c={palette.R} /><Swatch $c={palette.O} /><Swatch $c={palette.G} $tick /><Swatch $c={palette.L} /><Swatch $c={palette.B} />
              </Legend>
              <LegendEnds><span>-50%</span><span>50%</span></LegendEnds>
            </Filters>
          </Content>
        </Dashboard>
      </Body>
      <TabStrip>
        <SheetTab $w={163} $pad={11}><Cell w={9} h={12} d="M.5 2.500c0-2.500 8-2.500 8 0v7c0 2.500-8 2.500-8 0zc0 2.300 8 2.300 8 0" /><TabName>Data Source</TabName></SheetTab>
        {sheetTabs.map(([t, w, c, on, plain]) => <SheetTab key={t} $w={w} $c={c} $on={on}>{!plain && <GridIcon />}<TabName>{t}</TabName></SheetTab>)}
        <SheetTab $w={32}><Cell w={16} h={16} d="M8 12.500H1.500v-11h11V8M4.500 10V7M6.500 10V4M9.500 8V6M12.500 9v7M9 12.500h7" sw={1.2} /></SheetTab>
        <SheetTab $w={32}><Cell w={16} h={16} d="M8 12.500H1.500v-11h11V8M6.500 1.500v11M1.500 6.500h11M12.500 9v7M9 12.500h7" sw={1.2} /></SheetTab>
        <SheetTab $w={32}><Cell w={16} h={16} d="M8 13.500l-1.500-1h-5v-11h3.500l1.500 1 1.500-1h5V8M6.500 2.500v10M12.500 9v7M9 12.500h7" sw={1.2} /></SheetTab>
      </TabStrip>
    </Window>
  );
}
